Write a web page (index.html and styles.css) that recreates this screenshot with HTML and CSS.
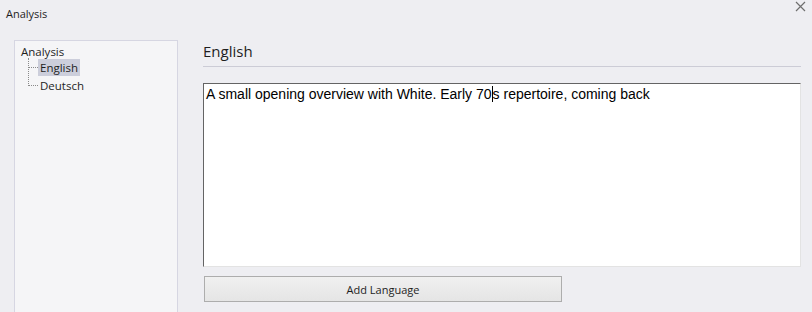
FILE: index.html
```html
<!DOCTYPE html>
<html lang="en">

<head>
    <title>Analysis</title>
    <link rel="stylesheet" href="styles.css">
</head>

<body>
    <div class="titlebar">
        <span class="title">Analysis</span>
        <svg class="close" width="11" height="11" viewBox="0 0 11 11">
            <path d="M1 1 L10 10 M10 1 L1 10" stroke="#6f6f6f" stroke-width="1.2" fill="none" />
        </svg>
    </div>

    <div class="main">
        <!-- Language tree -->
        <div class="tree">
            <div class="node root">Analysis</div>
            <div class="children">
                <div class="node child"><span class="branch"></span><span class="label selected">English</span></div>
                <div class="node child last"><span class="branch"></span><span class="label">Deutsch</span></div>
            </div>
        </div>

        <!-- Editor for selected language -->
        <div class="content">
            <div class="heading">English</div>
            <div class="editor">A small opening overview with White. Early 70<span class="caret"></span>s repertoire, coming back</div>
            <button class="add-btn">Add Language</button>
        </div>
    </div>
</body>

</html>
```

FILE: styles.css
```css
/* Window */
body {
    margin: 0;
    padding: 0;
    background-color: #eeeef2;
    font-family: 'Open Sans', 'Noto Sans', sans-serif;
    font-size: 11px;
    color: #1e1e1e;
    height: 312px;
    overflow: hidden;
}

.titlebar {
    position: relative;
    height: 30px;
    padding-left: 6px;
    line-height: 28px;
}

.close {
    position: absolute;
    top: 1px;
    right: 6px;
}

.main {
    display: flex;
    padding: 10px 11px 0 14px;
    height: 272px;
}

/* Tree panel */
.tree {
    width: 164px;
    border: 1px solid #d6d6e2;
    border-bottom: none;
    background-color: #f5f5f7;
    padding: 3px 0 0 6px;
    box-sizing: border-box;
    font-size: 11.5px;
}

.node {
    height: 16px;
    line-height: 16px;
}

.root {
    height: 14px;
}

.children {
    margin-left: 7px;
    border-left: 1px dotted #8a8a8a;
    height: 28px;
}

.child {
    display: flex;
    align-items: center;
    height: 18px;
}

.branch {
    width: 9px;
    border-top: 1px dotted #8a8a8a;
}

.label {
    padding: 0 2px;
    line-height: 17px;
}

.label.selected {
    background-color: #cccedb;
}

/* Content area */
.content {
    flex: 1;
    margin-left: 25px;
}

.heading {
    font-size: 15px;
    height: 26px;
    line-height: 22px;
    border-bottom: 1px solid #ccccd6;
}

.editor {
    margin-top: 16px;
    height: 178px;
    background-color: #ffffff;
    border-top: 1px solid #646464;
    border-left: 1px solid #646464;
    border-right: 1px solid #e3e3e3;
    border-bottom: 1px solid #e3e3e3;
    padding: 2px 2px;
    font-family: 'Liberation Sans', Arial, sans-serif;
    font-size: 14px;
    color: #000000;
    box-sizing: content-box;
}

.caret {
    display: inline-block;
    width: 0;
    height: 16px;
    border-left: 1px solid #000000;
    vertical-align: -3px;
}

.add-btn {
    display: block;
    margin: 9px 0 0 1px;
    width: 358px;
    height: 26px;
    border: 1px solid #adadad;
    background: linear-gradient(#f0f0f0, #e5e5e5);
    font-family: 'Open Sans', 'Noto Sans', sans-serif;
    font-size: 11px;
    color: #1e1e1e;
}
```
